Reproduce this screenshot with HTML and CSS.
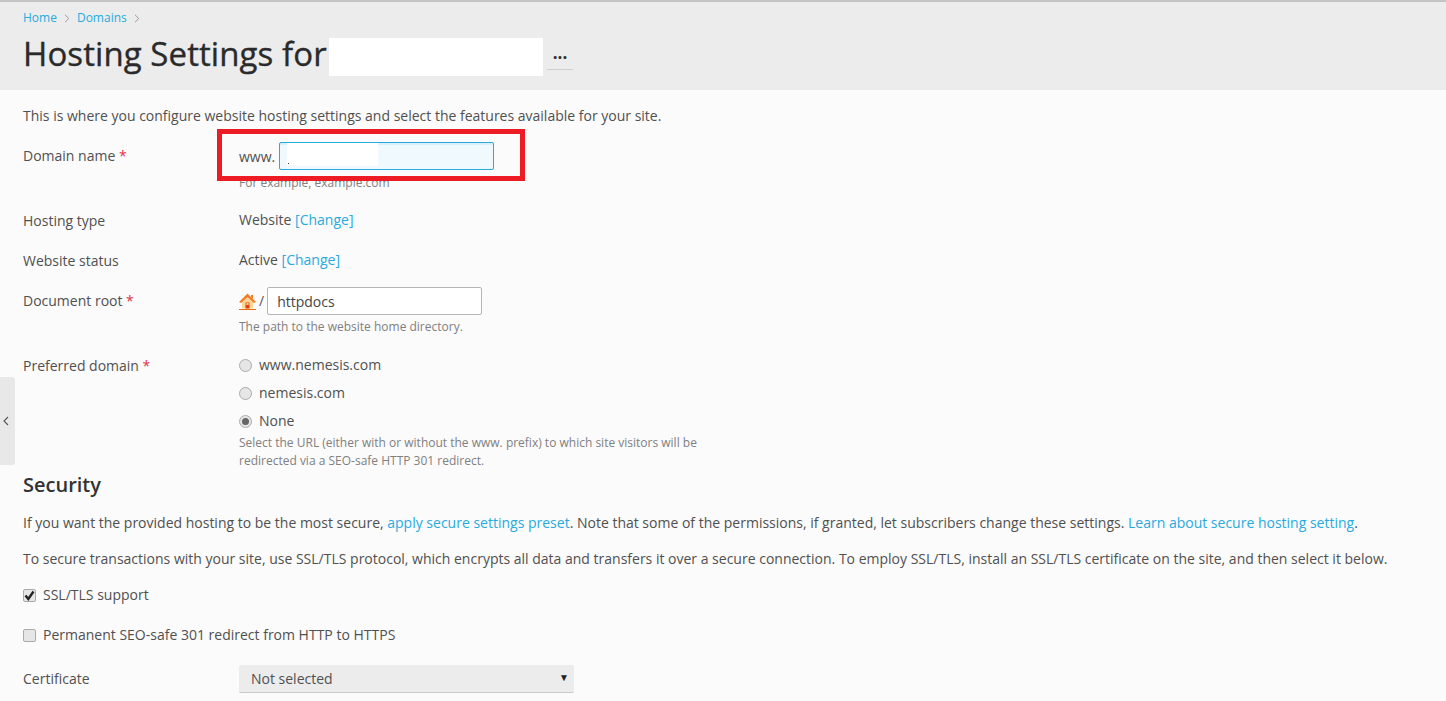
FILE: index.html
```html
<!DOCTYPE html>
<html lang="en">
<head>
<meta charset="utf-8">
<title>Hosting Settings</title>
<link rel="stylesheet" href="styles.css">
</head>
<body>
<header class="page-head">
  <nav class="crumbs">
    <a href="#">Home</a>
    <svg class="crumb-sep" width="6" height="9" viewBox="0 0 6 9"><path d="M1 .8 4.800 4.500 1 8.200" fill="none" stroke="#999" stroke-width="1"/></svg>
    <a href="#">Domains</a>
    <svg class="crumb-sep" width="6" height="9" viewBox="0 0 6 9"><path d="M1 .8 4.800 4.500 1 8.200" fill="none" stroke="#999" stroke-width="1"/></svg>
  </nav>
  <div class="title-line">
    <h1>Hosting Settings for</h1>
    <span class="title-mask"></span>
    <button class="more" type="button">...</button>
  </div>
</header>

<main class="content">
  <p class="intro">This is where you configure website hosting settings and select the features available for your site.</p>

  <div class="row row-domain">
    <div class="label">Domain name <span class="req">*</span></div>
    <div class="field">
      <div class="inline"><span class="www">www.</span><span class="domain-input"><span class="domain-mask"><i></i></span></span></div>
      <div class="hint hint-domain">For example, example.com</div>
    </div>
    <span class="callout"></span>
  </div>

  <div class="row row-type">
    <div class="label">Hosting type</div>
    <div class="field">Website <a href="#">[Change]</a></div>
  </div>

  <div class="row row-status">
    <div class="label">Website status</div>
    <div class="field">Active <a href="#">[Change]</a></div>
  </div>

  <div class="row row-root">
    <div class="label">Document root <span class="req">*</span></div>
    <div class="field">
      <div class="inline">
        <svg class="home" width="17" height="17" viewBox="0 0 17 17">
          <path d="M3 8.500 8.500 3.500 14 8.500V15.500H3z" fill="#fcd79a"/>
          <path d="M6.500 9.500h4v6h-4z" fill="#e23d0a"/>
          <path d="M7.300 10h2.400v2H7.300z" fill="#f9c98a"/>
          <path d="M0 9 8.500.5 17 9 15 10 8.500 4 2 10z" fill="#f47a22"/>
          <path d="M12 2h2v4l-2-2z" fill="#f47a22"/>
          <path d="M0 16h17v1H0z" fill="#ea6a12"/>
        </svg>
        <span class="slash">/</span>
        <span class="text-input">httpdocs</span>
      </div>
      <div class="hint hint-root">The path to the website home directory.</div>
    </div>
  </div>

  <div class="row row-pref">
    <div class="label">Preferred domain <span class="req">*</span></div>
    <div class="field">
      <div class="radio"><span class="radio-dot"></span>www.nemesis.com</div>
      <div class="radio"><span class="radio-dot"></span>nemesis.com</div>
      <div class="radio"><span class="radio-dot on"></span>None</div>
      <div class="hint hint-pref">Select the URL (either with or without the www. prefix) to which site visitors will be<br>redirected via a SEO-safe HTTP 301 redirect.</div>
    </div>
  </div>

  <h2>Security</h2>
  <p class="para">If you want the provided hosting to be the most secure, <a href="#">apply secure settings preset</a>. Note that some of the permissions, if granted, let subscribers change these settings. <a href="#">Learn about secure hosting setting</a>.</p>
  <p class="para para-2">To secure transactions with your site, use SSL/TLS protocol, which encrypts all data and transfers it over a secure connection. To employ SSL/TLS, install an SSL/TLS certificate on the site, and then select it below.</p>

  <div class="check check-ssl"><span class="box"><svg width="13" height="13" viewBox="0 0 13 13"><path d="M2.500 6.500 5.300 10 10.500 2.500" fill="none" stroke="#222" stroke-width="2.400"/></svg></span>SSL/TLS support</div>
  <div class="check check-301"><span class="box"></span>Permanent SEO-safe 301 redirect from HTTP to HTTPS</div>

  <div class="row row-cert">
    <div class="label">Certificate</div>
    <div class="field"><div class="select">Not selected<span class="caret">▼</span></div></div>
  </div>
</main>

<div class="side-tab"><svg width="6" height="10" viewBox="0 0 6 10"><path d="M5 1 1 5l4 4" fill="none" stroke="#555" stroke-width="1.100"/></svg></div>
</body>
</html>
```

FILE: styles.css
```css
* { box-sizing: border-box; }

html, body { height: 100%; }

body {
  margin: 0;
  overflow: hidden;
  position: relative;
  background: #fbfbfb;
  color: #505050;
  font-family: "Open Sans", "Liberation Sans", sans-serif;
  font-size: 14px;
  line-height: 20px;
}

a { color: #28aade; text-decoration: none; }

.page-head {
  height: 90px;
  padding: 8px 23px 0;
  background: #ececec;
  border-top: 2px solid #c4c4c4;
}

.crumbs {
  display: flex;
  align-items: center;
  height: 16px;
  font-size: 12px;
  line-height: 16px;
}

.crumb-sep { margin: 0 7px 0 7px; }

.title-line {
  display: flex;
  align-items: flex-start;
  margin-top: 12px;
}

h1 {
  width: 304px;
  margin: -3px 0 3px;
  color: #2a2a2a;
  font-size: 33px;
  font-weight: 400;
  letter-spacing: 0.08px;
  -webkit-text-stroke: 0.35px #2a2a2a;
  line-height: 38px;
  white-space: nowrap;
}

.title-mask {
  width: 214px;
  height: 38px;
  margin-left: 2px;
  background: #fff;
}

.more {
  width: 26px;
  height: 32px;
  margin-left: 4px;
  padding: 0 0 2px;
  border: 0;
  border-bottom: 1px solid #cfcfcf;
  background: transparent;
  color: #333;
  font: 700 17px/16px "Open Sans", sans-serif;
}

.content { padding: 16px 23px 0; }

.intro { margin: 0; height: 20px; }

.row {
  display: grid;
  grid-template-columns: 216px 1fr;
  position: relative;
}

.req { color: #e0304a; }

.row-domain { margin-top: 20px; height: 65px; }
.row-type { height: 40px; }
.row-status { height: 40px; }
.row-root { height: 65px; }
.row-pref { height: 116px; }
.row-cert { margin-top: 24px; }

.inline { display: flex; align-items: center; }

.www { margin: -2px 4px 0 0; }

.domain-input {
  position: relative;
  width: 215px;
  height: 28px;
  margin-top: -4px;
  border: 1px solid #28aade;
  border-radius: 2px;
  background: #f0f9fe;
  box-shadow: inset 0 2px 0 #d9effb;
}

.domain-mask {
  display: block;
  position: absolute;
  left: 7px;
  top: 0;
  width: 91px;
  height: 23px;
  background: #fff;
}

.domain-mask i {
  position: absolute;
  left: 1px;
  top: 20px;
  width: 1px;
  height: 1px;
  background: #333;
}

.callout {
  position: absolute;
  left: 194px;
  top: -17px;
  width: 308px;
  height: 52px;
  border: 5px solid #ed1c24;
}

.hint {
  color: #808080;
  font-size: 12px;
  line-height: 18px;
}

.hint-domain { margin-top: 4px; }
.hint-root { margin-top: 3px; }
.hint-pref { margin-top: -1px; }

.row-type .field, .row-status .field { margin-top: -1px; }

.row-root .field { margin-top: -4px; }

.home { margin-right: 3px; }

.slash { margin-right: 3px; color: #555; }

.text-input {
  width: 215px;
  height: 28px;
  padding: 4px 9px;
  border: 1px solid #b5b5b5;
  border-radius: 2px;
  background: #fff;
  color: #444;
  line-height: 20px;
}

.radio {
  display: flex;
  align-items: center;
  height: 28px;
  font-size: 14px;
}

.row-pref .field { margin-top: -5px; }

.radio-dot {
  position: relative;
  width: 13px;
  height: 13px;
  margin-right: 7px;
  border: 1px solid #aaa;
  border-radius: 50%;
  background: #e6e6e6;
}

.radio-dot.on::after {
  content: "";
  position: absolute;
  left: 2px;
  top: 2px;
  width: 7px;
  height: 7px;
  border-radius: 50%;
  background: #666;
}

h2 {
  margin: 0;
  color: #333;
  font-size: 20px;
  font-weight: 600;
  line-height: 26px;
}

.para { margin: 15px 0 0; white-space: nowrap; }
.para-2 { margin-top: 16px; }

.check {
  display: flex;
  align-items: center;
  height: 20px;
}

.check-ssl { margin-top: 16px; }
.check-301 { margin-top: 20px; }

.box {
  display: block;
  width: 13px;
  height: 13px;
  margin-right: 7px;
  border: 1px solid #aaa;
  border-radius: 2px;
  background: #e6e6e6;
  overflow: visible;
}

.box svg { display: block; margin: -1px; }

.select {
  display: flex;
  justify-content: space-between;
  align-items: center;
  width: 335px;
  height: 28px;
  margin-top: -4px;
  padding: 0 5px 0 12px;
  border-bottom: 1px solid #c9c9c9;
  border-radius: 2px;
  background: #ececec;
}

.caret { font-size: 10px; line-height: 10px; margin-top: -4px; color: #222; }

.side-tab {
  display: flex;
  align-items: center;
  position: absolute;
  left: 0;
  top: 377px;
  width: 15px;
  height: 88px;
  padding-left: 3px;
  border-radius: 0 3px 3px 0;
  background: #e8e8e8;
}
```
